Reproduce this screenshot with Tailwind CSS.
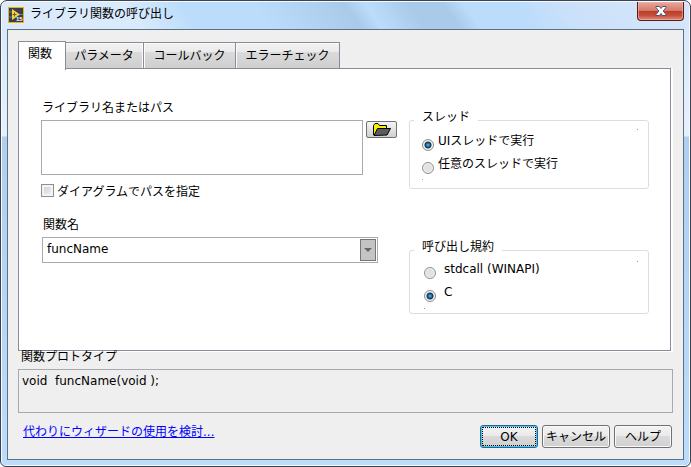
<!DOCTYPE html>
<html lang="ja">
<head>
    <meta charset="UTF-8">
    <meta name="viewport" content="width=device-width, initial-scale=1.0">
    <title>ライブラリ関数の呼び出し</title>
    <script src="https://cdn.jsdelivr.net/npm/@tailwindcss/browser@4"></script>
</head>
<body class="min-h-screen flex bg-white text-black text-[12px] leading-4 font-['DejaVu_Sans','Noto_Sans_CJK_JP',sans-serif]">
    <div class="flex-1 flex flex-col border border-[#3c4250] rounded-t-[7px] rounded-b-[6px] bg-[linear-gradient(180deg,#d6e8fa_0,#e6f0fb_135px,#b0cff0_136px,#bbdcfb_100%)] shadow-[inset_0_0_0_1px_#f4faff] px-[6px] pb-[6px]">
        <header class="flex items-start h-[27px] -mx-[5px] mt-px pl-[6px] pr-[5px] rounded-t-[6px] bg-[linear-gradient(55deg,#dcebfb_0,#d8eafc_20%,#bbdcfb_28%,#bbdcfb_38%,#a9cae9_51%,#bbdcfb_54%,#a9cae9_60%,#a9cae9_65%,#bbdcfb_68%,#bbdcfb_75%,#cbe1f9_82%,#d6e6fa_100%)]">
            <svg class="mt-[5px] size-4" viewBox="0 0 16 16" aria-hidden="true">
                <rect x="0.5" y="0.5" width="15" height="15" fill="#3a4048" stroke="#eeb111"/>
                <path d="M1 5h4M1 10h4M11 7.500h4" stroke="#1f8fd0"/>
                <path d="M4 2l8 5.500-8 5.500z" fill="#fbd04a"/>
                <path d="M6.500 5.500v4M4.500 7.500h4" stroke="#7a5a10"/>
                <text x="8" y="14" font-size="6" font-weight="700" fill="#fff" font-family="Liberation Sans">15</text>
            </svg>
            <h1 class="ml-[6px] mt-1">ライブラリ関数の呼び出し</h1>
            <button type="button" aria-label="閉じる" class="ml-auto w-[47px] h-[19px] flex items-center justify-center border border-t-0 border-[#5b1a1e] rounded-b-[4px] bg-[linear-gradient(180deg,#e9a99c_0,#d5796b_48%,#bb3a25_50%,#c5503a_75%,#e0907a_100%)] shadow-[inset_0_0_0_1px_#f0b9ac99]">
                <svg class="w-3 h-[10px]" viewBox="0 0 12 10" aria-hidden="true">
                    <path d="M1 .5h3.500L6 2.500 7.500.5H11v1L8.200 5 11 8.500v1H7.500L6 7.500 4.500 9.500H1v-1L3.800 5 1 1.500z" fill="#fff" stroke="#4e5468"/>
                </svg>
            </button>
        </header>

        <main class="flex-1 flex flex-col bg-[#efefef] border border-[#5f7080] pt-[10px] px-[10px] pb-[11px]">
            <nav class="flex items-end relative z-10 h-[29px]" role="tablist">
                <button type="button" role="tab" aria-selected="true" class="w-12 h-[29px] -mb-px pb-1 pr-1 bg-white border border-b-0 border-[#8a8a98]">関数</button>
                <button type="button" role="tab" class="w-[78px] h-[27px] pr-px border border-l-0 border-[#8a8a98] bg-[linear-gradient(180deg,#f2f2f2_0,#ebebeb_35%,#dadada_38%,#cfcfcf_100%)] shadow-[inset_-1px_1px_0_#fbfbfb]">パラメータ</button>
                <button type="button" role="tab" class="w-[92px] h-[27px] border border-l-0 border-[#8a8a98] bg-[linear-gradient(180deg,#f2f2f2_0,#ebebeb_35%,#dadada_38%,#cfcfcf_100%)] shadow-[inset_1px_1px_0_#fbfbfb]">コールバック</button>
                <button type="button" role="tab" class="w-[104px] h-[27px] border border-l-0 border-[#8a8a98] bg-[linear-gradient(180deg,#f2f2f2_0,#ebebeb_35%,#dadada_38%,#cfcfcf_100%)] shadow-[inset_1px_1px_0_#fbfbfb]">エラーチェック</button>
            </nav>

            <section role="tabpanel" class="-mt-px mr-[2px] flex-1 flex items-start gap-3 bg-white border border-[#8a8a98] shadow-[2px_1px_0_#fff] pl-[22px] pr-[21px]">
                <div class="flex-1">
                    <label for="library" class="block mt-[31px] ml-px">ライブラリ名またはパス</label>
                    <div class="flex items-start gap-[3px] mt-1">
                        <textarea id="library" class="flex-1 min-w-0 block h-[55px] border border-[#a9a9af] resize-none outline-none"></textarea>
                        <button type="button" aria-label="参照" class="w-[31px] h-[17px] mt-px flex items-center justify-center border border-[#707070] rounded-[2px] bg-linear-to-b from-[#f4f4f4] to-[#d0d0d0]">
                            <svg class="w-[18px] h-[13px]" viewBox="0 0 18 13" aria-hidden="true">
                                <path d="M.5 12V2.500L2 .5h3l1.500 2h7V5" fill="#f5ee00" stroke="#000"/>
                                <path d="M1 12.500L4.500 5.500h13l-3.500 6.500z" fill="#5c5c5c" stroke="#000"/>
                            </svg>
                        </button>
                    </div>
                    <div class="flex items-start gap-[3px] mt-[9px]">
                        <input id="diagram" type="checkbox" class="appearance-none size-[13px] border border-[#8e8f8f] bg-linear-to-br from-[#c8ccd2] to-[#f6f6f6] shadow-[inset_0_0_0_2px_#f4f4f4]">
                        <label for="diagram">ダイアグラムでパスを指定</label>
                    </div>
                    <label for="function" class="block mt-[17px] ml-[2px]">関数名</label>
                    <div class="relative mt-1 ml-px mr-[19px]">
                        <select id="function" class="appearance-none block w-full h-[26px] pl-1 pb-[2px] border border-[#a9a9af] bg-white outline-none">
                            <option>funcName</option>
                        </select>
                        <span class="absolute right-[2px] top-[2px] w-4 h-[22px] flex items-center justify-center border border-[#777777] bg-[#c4c4c4] pointer-events-none">
                            <svg class="w-2 h-1" viewBox="0 0 8 4" aria-hidden="true"><path d="M0 0h8L4 4z" fill="#666"/></svg>
                        </span>
                    </div>
                </div>

                <div class="w-60">
                    <fieldset class="relative mt-[51px] h-[69px] border border-[#d5dfe5] rounded-[3px] pt-3 pl-3">
                        <legend class="absolute left-1 -top-3 px-2 bg-white">スレッド</legend>
                        <div class="flex items-start gap-1 h-[23px]">
                            <input id="ui" type="radio" name="thread" checked class="appearance-none size-3 mt-[6px] rounded-full border border-[#8e8f8f] bg-[#e2e2e2] shadow-[inset_0_0_0_1px_#f6f6f6] checked:bg-[radial-gradient(circle,#5cc4ee_0,#1c5c8c_2px,#17364f_3px,#e6e6e6_4px)]">
                            <label for="ui">UIスレッドで実行</label>
                        </div>
                        <div class="flex items-start gap-1 h-[23px]">
                            <input id="any" type="radio" name="thread" class="appearance-none size-3 mt-[6px] rounded-full border border-[#8e8f8f] bg-[#e2e2e2] shadow-[inset_0_0_0_1px_#f6f6f6]">
                            <label for="any">任意のスレッドで実行</label>
                        </div>
                        <span class="absolute right-[10px] top-2 size-px bg-[#999999]"></span>
                        <span class="absolute left-3 bottom-2 size-px bg-[#999999]"></span>
                    </fieldset>
                    <fieldset class="relative mt-[61px] h-16 border border-[#d5dfe5] rounded-[3px] pt-[10px] pl-[14px]">
                        <legend class="absolute left-1 -top-3 px-2 bg-white">呼び出し規約</legend>
                        <div class="flex items-start gap-2 h-[23px]">
                            <input id="stdcall" type="radio" name="convention" class="appearance-none size-3 mt-[6px] rounded-full border border-[#8e8f8f] bg-[#e2e2e2] shadow-[inset_0_0_0_1px_#f6f6f6]">
                            <label for="stdcall">stdcall (WINAPI)</label>
                        </div>
                        <div class="flex items-start gap-2 h-[23px]">
                            <input id="c" type="radio" name="convention" checked class="appearance-none size-3 mt-[6px] rounded-full border border-[#8e8f8f] bg-[#e2e2e2] shadow-[inset_0_0_0_1px_#f6f6f6] checked:bg-[radial-gradient(circle,#5cc4ee_0,#1c5c8c_2px,#17364f_3px,#e6e6e6_4px)]">
                            <label for="c">C</label>
                        </div>
                        <span class="absolute right-[10px] top-[10px] size-px bg-[#999999]"></span>
                        <span class="absolute left-[14px] bottom-1 size-px bg-[#999999]"></span>
                    </fieldset>
                </div>
            </section>

            <h2 class="-mt-[2px] ml-[3px] relative">関数プロトタイプ</h2>
            <output class="block mt-1 h-11 border border-[#a9a9af] pl-[3px] pt-[3px] whitespace-pre">void  funcName(void );</output>

            <footer class="flex items-center gap-1 mt-3 ml-[5px] mr-px">
                <a href="#" class="mr-auto -mt-[10px] text-[#0000ff] underline">代わりにウィザードの使用を検討...</a>
                <button type="submit" class="w-[58px] h-[23px] border border-[#2c628b] rounded-[3px] bg-[linear-gradient(180deg,#f2f2f2_0,#ebebeb_45%,#dadada_50%,#d0d0d0_100%)] shadow-[inset_0_0_0_1px_#46c8f0] outline-1 outline-dotted outline-black -outline-offset-[3px]">OK</button>
                <button type="button" class="w-[68px] h-[23px] border border-[#707070] rounded-[3px] bg-[linear-gradient(180deg,#f2f2f2_0,#ebebeb_45%,#dadada_50%,#d0d0d0_100%)] shadow-[inset_0_0_0_1px_#fafafa]">キャンセル</button>
                <button type="button" class="w-[58px] h-[23px] border border-[#707070] rounded-[3px] bg-[linear-gradient(180deg,#f2f2f2_0,#ebebeb_45%,#dadada_50%,#d0d0d0_100%)] shadow-[inset_0_0_0_1px_#fafafa]">ヘルプ</button>
            </footer>
        </main>
    </div>
</body>
</html>
